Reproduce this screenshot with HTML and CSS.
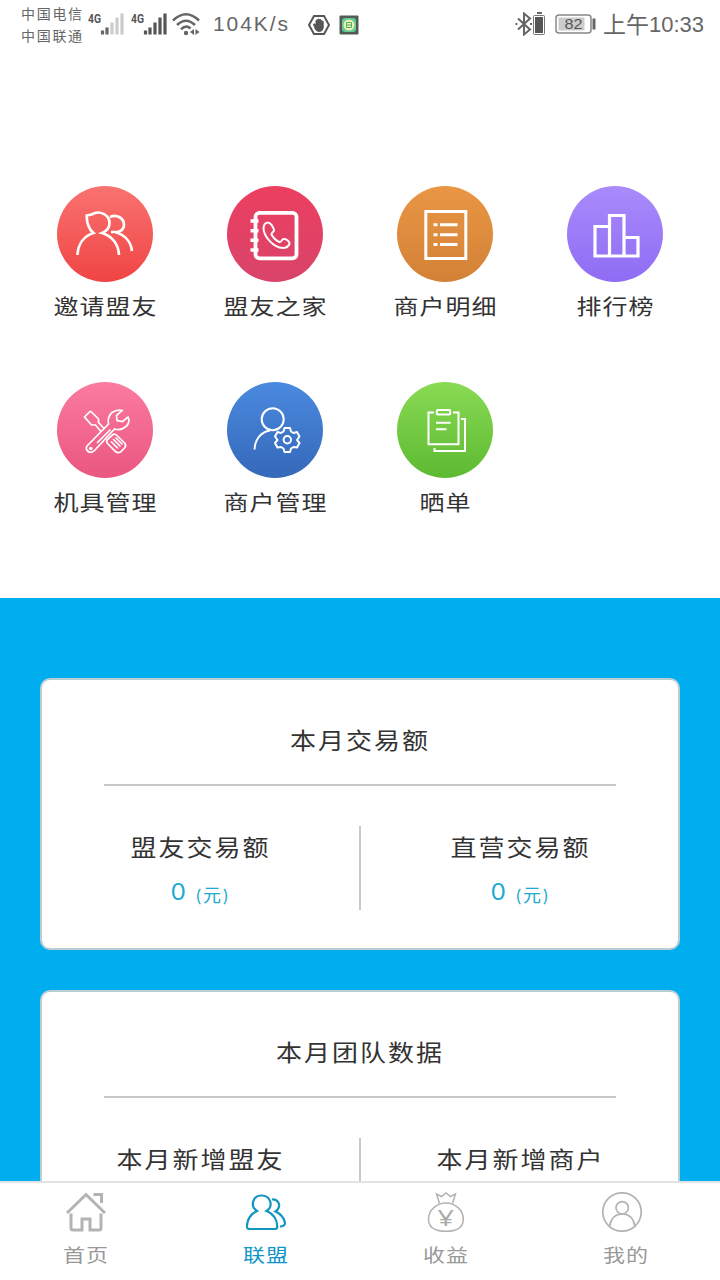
FILE: index.html
```html
<!DOCTYPE html>
<html lang="zh-CN">
<head>
    <meta charset="UTF-8">
    <title>联盟</title>
    <meta name="viewport" content="width=device-width, initial-scale=1.0"/>
    <link rel="stylesheet" href="styles.css">
</head>
<body>
<div class="page">
    <div class="status">
        <div class="carrier">
            <span>中国电信</span>
            <span>中国联通</span>
        </div>
        <svg class="signal" width="37" height="26" viewBox="0 0 37 26">
            <text class="net" x="0" y="13" textLength="13" lengthAdjust="spacingAndGlyphs">4G</text>
            <path d="M14.500 24.500v-4M19 24.500v-7" stroke="#666" stroke-width="3.200"/>
            <path d="M24 24.500v-12M29 24.500v-17M34 24.500v-21" stroke="#ccc" stroke-width="3.200"/>
        </svg>
        <svg class="signal" width="37" height="26" viewBox="0 0 37 26">
            <text class="net" x="0" y="13" textLength="13" lengthAdjust="spacingAndGlyphs">4G</text>
            <path d="M14.500 24.500v-4M19 24.500v-7M24 24.500v-12M29 24.500v-17M34 24.500v-21" stroke="#555" stroke-width="3.200"/>
        </svg>
        <svg class="wifi" width="28" height="24" viewBox="0 0 28 24" fill="none" stroke="#666" stroke-width="2.600">
            <path d="M1 8.500Q14-4 27 8.500M5 13Q14 4.500 23 13M9 17.300Q14 12.500 18.500 16.500"/>
            <circle cx="14" cy="21" r="2.200" fill="#666" stroke="none"/>
            <path d="M18 20l4-3v6zM27.500 20l-4-3v6z" fill="#666" stroke="none"/>
        </svg>
        <div class="speed">104K/s</div>
        <svg class="guard" width="22" height="20" viewBox="0 0 22 20">
            <path d="M6 1h10l5 9-5 9H6l-5-9z" fill="#fff" stroke="#555" stroke-width="2"/>
            <path d="M5.500 9l1.500 0 1 2V5.500q1-1.200 1.700 0V4.500q1-1.200 1.800 0V5q1-1 1.800 0v1.500q1-1 1.900 0V13q-.7 3.500-4 3.500-3 0-4.200-3z" fill="#555" stroke="#555"/>
        </svg>
        <svg class="app" width="20" height="20" viewBox="0 0 20 20">
            <rect x=".5" y=".5" width="19" height="19" rx="1" fill="#535c53"/>
            <rect x="3" y="3" width="14" height="14" rx="3" fill="#62c99a"/>
            <circle cx="10" cy="10" r="5.500" fill="#eaf3a9"/>
            <path d="M7.500 7.500h5v5h-5zM7.500 10h5" fill="none" stroke="#57ad75"/>
        </svg>
        <div class="right">
            <svg class="bluetooth" width="31" height="24" viewBox="0 0 31 24">
                <path d="M3 6.500l12 11-6 5v-21l6 5-12 11" fill="none" stroke="#666" stroke-width="2"/>
                <path d="M.5 11h2v2h-2zM15 11h2v2h-2z" fill="#666"/>
                <path d="M22 1h5" stroke="#666" stroke-width="2"/>
                <rect x="18.500" y="3.500" width="11" height="19" rx="1" fill="#fff" stroke="#777"/>
                <path d="M20 5h8v16h-8z" fill="#555"/>
            </svg>
            <svg class="battery" width="41" height="20" viewBox="0 0 41 20">
                <rect x="1" y="1" width="35" height="18" rx="3" fill="#fff" stroke="#888" stroke-width="1.500"/>
                <path d="M3.500 3.500h26v13h-26z" fill="#ccc"/>
                <path d="M39 4.500v11" stroke="#666" stroke-width="3"/>
                <text class="level" x="9.500" y="15.200" textLength="18" lengthAdjust="spacingAndGlyphs">82</text>
            </svg>
            <div class="time">上午<span>10:33</span></div>
        </div>
    </div>

    <div class="menu">
        <div class="item">
            <div class="circle red">
                <svg viewBox="0 0 96 96" stroke-width="2.700">
                    <path d="M20.500 69C21 58 27 50 36.500 47C31.500 43 29.700 37 29.700 29.500L34.500 28.500C43 23.500 52.500 29 52.500 37C52.500 41.500 50 45 45 47C55 50 61.500 58 62 69"/>
                    <path d="M53 31C60 28 67 32 67 39C67 43 63.500 45.500 59 46.500C68 49 74 56 75 65M54 46h6"/>
                </svg>
            </div>
            <p>邀请盟友</p>
        </div>
        <div class="item">
            <div class="circle rose">
                <svg viewBox="0 0 96 96">
                    <rect x="28.500" y="26.800" width="41" height="45.500" rx="4" stroke-width="3.800"/>
                    <path d="M23.500 35h8M23.500 44.700h8M23.500 54.300h8M23.500 64h8" stroke-width="3.600"/>
                    <path d="M40.500 36.500C43 36 46 40.500 47 43.500C48 46 44 46.500 44.500 48.500Q47.500 54 52.500 56C54.500 56.500 54.500 53 57 53C60 53 63 56 62.500 58Q60.500 62 56 62C46 61.500 36.500 50 36.500 42Q37 37 40.500 36.500z" stroke-width="2"/>
                </svg>
            </div>
            <p>盟友之家</p>
        </div>
        <div class="item">
            <div class="circle orange">
                <svg viewBox="0 0 96 96" stroke-width="3">
                    <rect x="28.800" y="25.500" width="40" height="47"/>
                    <path d="M36.500 38.700h4M43 38.700h17.500M36.500 48.700h4M43 48.700h17.500M36.500 58.500h4M43 58.500h17.500"/>
                </svg>
            </div>
            <p>商户明细</p>
        </div>
        <div class="item">
            <div class="circle purple">
                <svg viewBox="0 0 96 96" stroke-width="3.200">
                    <path d="M28 70V40.500h14M42.500 70V29.500h14.500V70M57 51.500h14V70M26.400 70h46.200"/>
                </svg>
            </div>
            <p>排行榜</p>
        </div>
        <div class="item">
            <div class="circle pink">
                <svg viewBox="0 0 96 96" stroke-width="1.700">
                    <path d="M33.500 29L27.500 35L34.500 43H38.500L44 49.500M33.500 29L41.500 37V40.500L47.500 47"/>
                    <path d="M30.500 63.500L51.500 42Q50 35 55 30.500Q60 27 65 28.500L59.500 33.500L60 38.500L65.500 39.500L71 35Q73.500 40.500 69 44.500Q63.500 49 57.500 47L38 68Q34 72 30.500 69Q28 66 30.500 63.500z"/>
                    <path d="M40 61L53.500 47.500"/>
                    <circle cx="33.800" cy="66.500" r="1"/>
                    <path d="M50 58L56 52.500Q58 51.500 60 53.500L68 61.500Q69.500 64 67.500 66L63.500 70Q61 71.500 58.500 69.500L50.500 61.500Q49 60 50 58zM54 59.500L61 66.500M56 57L63.500 64.500M58.500 55.500L65.500 62.500"/>
                </svg>
            </div>
            <p>机具管理</p>
        </div>
        <div class="item">
            <div class="circle blue">
                <svg viewBox="0 0 96 96" stroke-width="2">
                    <circle cx="45.700" cy="37.300" r="11"/>
                    <path d="M27.500 67.500C28 57 34 50 43 48.500"/>
                    <path d="M57.500 46h5.500l1 3.500 2.500 1.500 3.500-1 2.500 4.500-2.500 3.500 2.500 3-2.500 4.500-3.500-.5-2.500 1.500-1 3.500h-5.500l-1-3.500-2.500-1.500-3.500.5-2.500-4.500 2.500-3-2.500-3.500 2.500-4.500 3.500 1 2.500-1.500z" stroke-linejoin="round"/>
                    <circle cx="60.300" cy="57.800" r="3.700"/>
                </svg>
            </div>
            <p>商户管理</p>
        </div>
        <div class="item">
            <div class="circle green">
                <svg viewBox="0 0 96 96" stroke-width="2">
                    <path d="M37 30.500h-5.500v31.800h30V30.500h-5.500"/>
                    <rect x="39.800" y="28" width="13.400" height="4.600" rx="1"/>
                    <path d="M39 40.700h14.500M39 47.300h10.500M64 37h4v32H37.500v-3"/>
                </svg>
            </div>
            <p>晒单</p>
        </div>
    </div>

    <div class="data">
        <div class="card">
            <h2><span>本月交易额</span></h2>
            <div class="cols">
                <div class="col">
                    <p>盟友交易额</p>
                    <div class="num">0<span>(元)</span></div>
                </div>
                <div class="col">
                    <p>直营交易额</p>
                    <div class="num">0<span>(元)</span></div>
                </div>
            </div>
        </div>
        <div class="card">
            <h2><span>本月团队数据</span></h2>
            <div class="cols">
                <div class="col">
                    <p>本月新增盟友</p>
                </div>
                <div class="col">
                    <p>本月新增商户</p>
                </div>
            </div>
        </div>
    </div>

    <div class="tabs">
        <div class="tab">
            <svg width="40" height="40" viewBox="0 0 40 40" stroke-width="3">
                <path d="M1 21L20 2.500L39 21M27.500 2.500H35.500V11M5 21.500V36Q5 38 7 38H16V27H24V38H33Q35 38 35 36V21.500"/>
            </svg>
            <p>首页</p>
        </div>
        <div class="tab active">
            <svg width="40" height="40" viewBox="0 0 40 40" stroke-width="2.200">
                <path d="M11 19C3.500 14 7 3.500 15.700 3.500S28 14 20.500 19C27.500 21.500 31.300 28 31.300 34.500Q31.300 37 29 37H3Q.9 37 .9 34.500C1.200 28 4.500 22 11 19z"/>
                <path d="M26 7.500C31.500 7 34.500 12 32.500 16Q31.500 18.500 29.500 19.500C35 22 38 26 39 31Q39 34.500 34 34.500"/>
            </svg>
            <p>联盟</p>
        </div>
        <div class="tab">
            <svg width="40" height="40" viewBox="0 0 40 40" stroke-width="1.500">
                <path d="M13.500 11.500L10.500 2L15.500 4.500L20 1L24.500 4.500L29.500 2L26.500 11.500"/>
                <path d="M20 11C29 11 37.300 18 37.300 27C37.300 35 31 39.300 20 39.300S2.500 35 2.500 27C2.500 18 11 11 20 11z"/>
                <text class="yuan" x="11.500" y="33.500" textLength="16.500" lengthAdjust="spacingAndGlyphs">¥</text>
            </svg>
            <p>收益</p>
        </div>
        <div class="tab mine">
            <svg width="40" height="40" viewBox="0 0 40 40" stroke-width="1.700">
                <circle cx="20" cy="20" r="19.200"/>
                <circle cx="20.200" cy="15.800" r="6.200"/>
                <path d="M7.500 34.500C9 26 14 22 20.200 22S31.500 26 33 34.500"/>
            </svg>
            <p>我的</p>
        </div>
    </div>
</div>
</body>
</html>
```
FILE: styles.css
```css
* {
    box-sizing: border-box;
}

body, h2, p {
    margin: 0;
    font-weight: normal;
}

body {
    background-color: #ffffff;
    color: #333333;
    font-family: Lato, "Noto Sans CJK SC", sans-serif;
}

.page {
    display: flex;
    flex-direction: column;
    width: 720px;
    height: 1280px;
    overflow: hidden;
}

svg {
    display: block;
    flex: none;
}

/* status bar */
.status {
    display: flex;
    flex: none;
    height: 48px;
    padding: 0 15px 0 21px;
    color: #666666;
    white-space: nowrap;
}

.carrier {
    display: flex;
    flex-direction: column;
    width: 67px;
    padding-top: 3px;
    font-size: 14px;
    line-height: 22px;
    letter-spacing: 1.7px;
}

.signal {
    margin-top: 10px;
    margin-right: 6px;
}

.net {
    font: bold 13px Roboto, sans-serif;
    fill: #555555;
}

.wifi {
    margin-top: 12px;
    margin-left: -2px;
    margin-right: 13px;
}

.speed {
    width: 95px;
    font-family: "Liberation Sans", sans-serif;
    font-size: 21px;
    line-height: 48px;
    letter-spacing: 1.9px;
}

.guard {
    margin-top: 15px;
    margin-right: 9px;
}

.app {
    margin-top: 15px;
}

.right {
    display: flex;
    margin-left: auto;
}

.bluetooth {
    margin-top: 12px;
    margin-right: 9px;
}

.battery {
    margin-top: 14px;
    margin-right: 7px;
}

.level {
    font: 15px "Liberation Sans", sans-serif;
    fill: #555555;
}

.time {
    width: 102px;
    font-size: 23px;
    line-height: 48px;
}

.time span {
    font-family: "Liberation Sans", sans-serif;
    font-size: 22px;
    vertical-align: 1px;
}

/* menu */
.menu {
    display: grid;
    flex: none;
    grid-template-columns: repeat(4, 170px);
    grid-auto-rows: 196px;
    height: 550px;
    padding: 138px 20px 0;
}

.item {
    display: flex;
    flex-direction: column;
    align-items: center;
}

.item p {
    margin-top: 6px;
    padding-left: 1px;
    font-size: 25px;
    line-height: 36px;
    letter-spacing: 1px;
    transform: scaleY(0.84);
}

.circle {
    width: 96px;
    height: 96px;
    border-radius: 50%;
}

.circle svg {
    fill: none;
    stroke: #ffffff;
}

.red {
    background: linear-gradient(#f97370, #f04444);
}

.rose {
    background: linear-gradient(#ec3f60, #d9446a);
}

.orange {
    background: linear-gradient(#e99645, #d38136);
}

.purple {
    background: linear-gradient(#a98bfb, #8f6cf4);
}

.pink {
    background: linear-gradient(#fb7ba0, #ea5680);
}

.blue {
    background: linear-gradient(#4a8ae0, #3568b8);
}

.green {
    background: linear-gradient(#8ada54, #5cba31);
}

/* data cards */
.data {
    display: flex;
    flex: 1;
    flex-direction: column;
    gap: 40px;
    min-height: 0;
    padding: 80px 40px 0;
    background-color: #00aeef;
    overflow: hidden;
}

.card {
    flex: none;
    height: 272px;
    border: 2px solid #b9cdd3;
    border-radius: 10px;
    background-color: #ffffff;
}

.card h2 {
    height: 106px;
    margin: 0 62px;
    padding-top: 40px;
    border-bottom: 2px solid #c8c8c8;
    font-size: 26px;
    line-height: 40px;
    letter-spacing: 2px;
    text-align: center;
}

.card h2 span {
    display: inline-block;
    transform: scaleY(0.88);
}

.cols {
    display: flex;
    height: 84px;
    margin-top: 40px;
}

.col {
    width: 317px;
    text-align: center;
}

.col:first-child {
    width: 319px;
    border-right: 2px solid #c8c8c8;
}

.col:last-child {
    padding-left: 2px;
}

.col p {
    font-size: 26px;
    line-height: 43px;
    letter-spacing: 2px;
    transform: scaleY(0.88);
}

.num {
    color: #1ca9d3;
    font-size: 24px;
    line-height: 44px;
}

.num span {
    margin-left: 11px;
    font-size: 18px;
    letter-spacing: 2px;
    vertical-align: -2px;
}

/* bottom tabs */
.tabs {
    display: flex;
    flex: none;
    height: 99px;
    border-top: 2px solid #e2e2e2;
    background-color: #ffffff;
}

.tab {
    display: flex;
    flex: 1;
    flex-direction: column;
    align-items: center;
    padding: 9px 8px 0 0;
    color: #999999;
}

.tab svg {
    fill: none;
    stroke: #b3b3b3;
}

.tab p {
    margin-top: 7px;
    font-size: 22px;
    line-height: 32px;
    letter-spacing: 1px;
    transform: scaleY(0.85);
}

.tab .yuan {
    font: 21px "Open Sans", sans-serif;
    fill: #aaaaaa;
    stroke: none;
}

.tabs .active {
    color: #1296c8;
}

.active svg {
    stroke: #1296c0;
}

.mine svg {
    margin-right: 8px;
}
```
